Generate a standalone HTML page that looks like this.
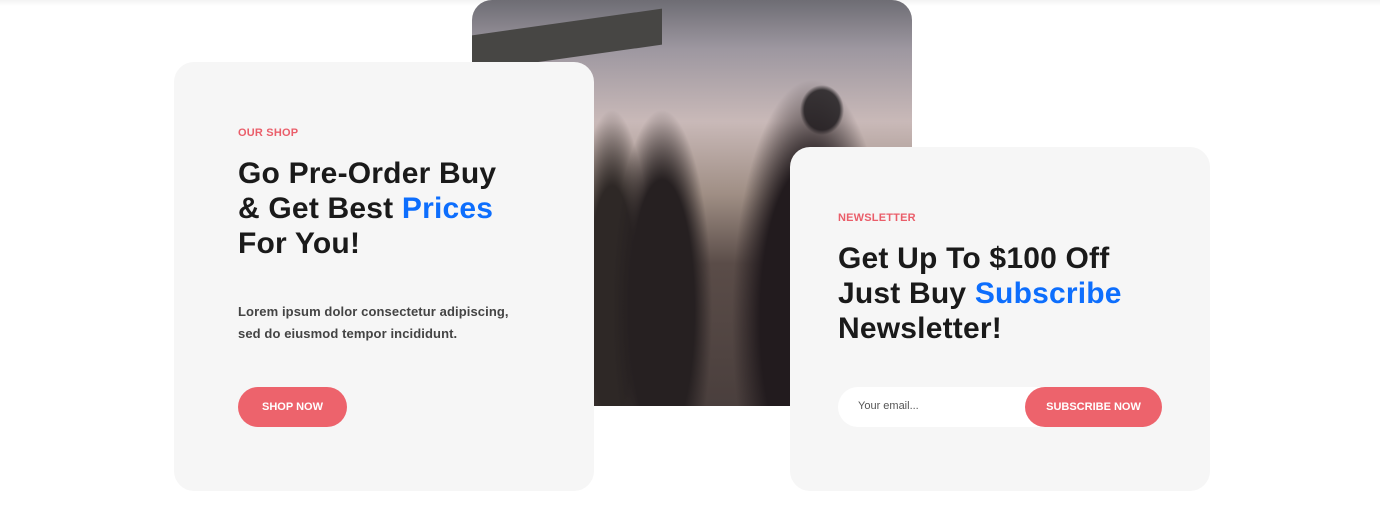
<!DOCTYPE html><html><head><style>
body{margin:0;width:1380px;height:527px;background:#fff;position:relative;overflow:hidden;font-family:"Liberation Sans",sans-serif}
.top{position:absolute;left:0;top:0;width:1380px;height:6px;background:linear-gradient(#f3f3f3,#fff)}
.img{position:absolute;left:472px;top:0;width:440px;height:406px;border-top-left-radius:20px;border-top-right-radius:20px;overflow:hidden;
background:
radial-gradient(ellipse 80px 240px at 340px 320px,#221b1e 65%,transparent 100%),
radial-gradient(ellipse 22px 25px at 350px 110px,#3a3638 80%,transparent 100%),
radial-gradient(ellipse 50px 200px at 190px 310px,#262021 65%,transparent 100%),
radial-gradient(ellipse 40px 190px at 140px 300px,#2e2826 60%,transparent 100%),
linear-gradient(#6e6d74 0%,#9d97a0 12%,#c9b9b8 30%,#9f8e84 48%,#5a4c48 65%,#4a3f3d 100%)}
.wing{position:absolute;left:0;top:22px;width:190px;height:36px;background:#474644;transform:skewY(-8deg);}
.card{position:absolute;background:#f6f6f6;border-radius:20px}
.l{left:174px;top:62px;width:420px;height:429px}
.r{left:790px;top:147px;width:420px;height:344px}
.tag{position:absolute;font-size:11px;font-weight:bold;color:#ea5e6a;letter-spacing:.2px}
h2{position:absolute;margin:0;font-size:30px;line-height:35px;font-weight:bold;color:#1a1a1a;letter-spacing:.2px}
h2 span{color:#0d6efd}
p{position:absolute;margin:0;font-size:13px;line-height:22px;font-weight:bold;color:#444;letter-spacing:.1px}
.btn{position:absolute;background:#ed636c;color:#fff;font-size:11px;font-weight:bold;border-radius:20px;text-align:center;line-height:40px;height:40px}
.inp{position:absolute;left:48px;top:240px;width:323px;height:40px;background:#fff;border-radius:20px}
</style></head><body>
<div class="top"></div>
<div class="img"><div class="wing"></div></div>
<div class="card l">
<div class="tag" style="left:64px;top:65px">OUR SHOP</div>
<h2 style="left:64px;top:94px">Go Pre-Order Buy<br>&amp; Get Best <span>Prices</span><br>For You!</h2>
<p style="left:64px;top:239px">Lorem ipsum dolor consectetur adipiscing,<br>sed do eiusmod tempor incididunt.</p>
<div class="btn" style="left:64px;top:325px;width:109px">SHOP NOW</div>
</div>
<div class="card r">
<div class="tag" style="left:48px;top:65px">NEWSLETTER</div>
<h2 style="left:48px;top:94px">Get Up To $100 Off<br>Just Buy <span>Subscribe</span><br>Newsletter!</h2>
<div class="inp"><span style="position:absolute;left:20px;top:13px;font-size:11px;color:#555">Your email...</span></div>
<div class="btn" style="left:235px;top:240px;width:137px">SUBSCRIBE NOW</div>
</div>
</body></html>
